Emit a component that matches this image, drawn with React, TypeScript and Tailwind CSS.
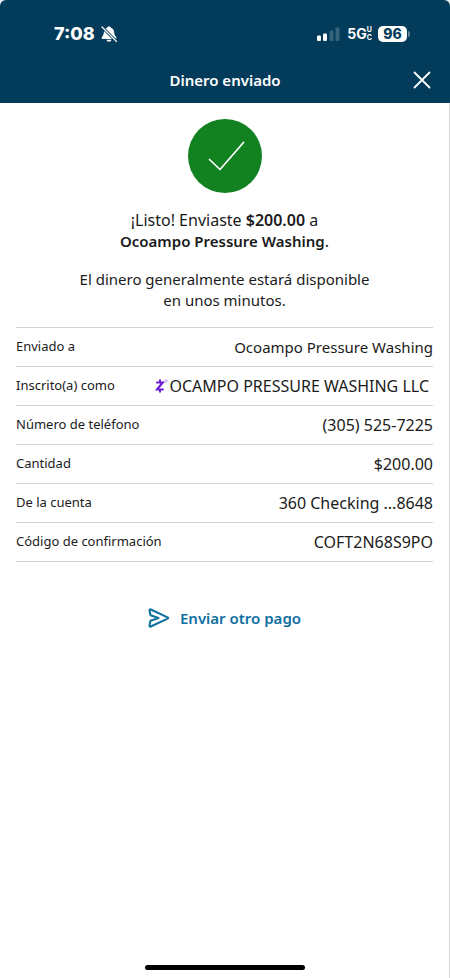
import React from "react";

type Detail = { label: string; value: string; zelle?: boolean; size: string };

const details: Detail[] = [
  { label: "Enviado a", value: "Ocoampo Pressure Washing", size: "text-[15px]" },
  { label: "Inscrito(a) como", value: "OCAMPO PRESSURE WASHING LLC", zelle: true, size: "text-base" },
  { label: "Número de teléfono", value: "(305) 525-7225", size: "text-base" },
  { label: "Cantidad", value: "$200.00", size: "text-base" },
  { label: "De la cuenta", value: "360 Checking ...8648", size: "text-base" },
  { label: "Código de confirmación", value: "COFT2N68S9PO", size: "text-base" },
];

function BellOff() {
  return (
    <svg className="h-4 w-4" viewBox="0 0 16 16" fill="none" aria-hidden="true">
      <path
        d="M8 .4c-1 0-1.700.5-1.900 1.300C4 2.400 2.900 4.200 2.800 6.500 2.700 8.800 2 9.600 1 10.800c-.9 1.100-.4 2.200.8 2.200h12.400c1.200 0 1.700-1.100.8-2.200-1-1.200-1.700-2-1.800-4.300-.1-2.300-1.200-4.100-3.300-4.800C9.700.9 9 .4 8 .4Z"
        fill="#fff"
      />
      <path d="M5.500 13.800h5c-.2 1.200-1.200 2-2.500 2s-2.300-.8-2.500-2Z" fill="#fff" />
      <path d="M1 1 15.500 15.500" stroke="#033c5a" strokeWidth="2.800" />
      <path d="M1 1 15.500 15.500" stroke="#fff" strokeWidth="1.200" strokeLinecap="round" />
    </svg>
  );
}

function Signal() {
  return (
    <svg className="h-4 w-6" viewBox="0 0 24 16" fill="#fff" aria-hidden="true">
      <rect x="0" y="9.500" width="4" height="5.500" rx="1.200" />
      <rect x="6" y="7.500" width="4" height="7.500" rx="1.200" />
      <rect x="12.500" y="4.500" width="4" height="10.500" rx="1.200" opacity=".2" />
      <rect x="18.500" y="1.500" width="4" height="13.500" rx="1.200" opacity=".2" />
    </svg>
  );
}

function ZelleMark() {
  return (
    <svg className="h-4 w-3.5" viewBox="0 0 14 16" fill="none" aria-hidden="true">
      <path d="M5 1.500v3M5 11.500v3" stroke="#6d1ed4" strokeWidth="2" />
      <path d="M1.200 4.500h6.500L2 11.500h6.800" stroke="#6d1ed4" strokeWidth="2.200" />
      <circle cx="11" cy="3" r="1.300" stroke="#c9a9ef" strokeWidth="1" />
    </svg>
  );
}

function SendIcon() {
  return (
    <svg
      className="h-5 w-[22px]"
      viewBox="0 0 22 20"
      fill="none"
      stroke="#0f6f9f"
      strokeWidth="2"
      strokeLinejoin="round"
      strokeLinecap="round"
      aria-hidden="true"
    >
      <path d="M1.500 2.500Q1.400 1 2.800 1.500L19.600 9.300q1.300.7 0 1.400L2.800 18.500Q1.400 19 1.500 17.500L2.500 12.800 10.500 10 2.500 7.200Z" />
    </svg>
  );
}

export default function App() {
  return (
    <div className="flex min-h-screen flex-col bg-[#033c5a] font-['Noto_Sans',sans-serif] text-[#1b1b1b]">
      <header className="bg-[#e6edf1] text-white">
        <div className="rounded-t-md bg-[#033c5a]">
          <div className="flex h-14 items-end justify-between pr-10 pl-[54px] pb-3">
            <div className="flex items-center gap-1.5">
              <span className="font-['Inter',sans-serif] text-lg leading-5 font-extrabold">7:08</span>
              <BellOff />
            </div>
            <div className="flex h-5 items-center gap-1.5">
              <Signal />
              <div className="flex items-center font-['Inter',sans-serif] font-bold">
                <span className="text-sm leading-4">5G</span>
                <span className="flex flex-col text-[7px] leading-[8px]">
                  <span>U</span>
                  <span>C</span>
                </span>
              </div>
              <div className="flex items-center gap-px">
                <span className="flex h-4 w-[29px] items-center justify-center rounded-[5px] bg-white font-['Inter',sans-serif] text-sm leading-4 font-extrabold text-[#033c5a]">
                  96
                </span>
                <span className="h-1.5 w-0.5 rounded-r-sm bg-[#5f8297]" />
              </div>
            </div>
          </div>
          <div className="grid h-[47px] grid-cols-[1fr_auto_1fr] items-center px-3">
            <h1 className="col-start-2 text-[15px] leading-5 font-semibold">Dinero enviado</h1>
            <button type="button" aria-label="Cerrar" className="flex h-8 w-8 items-center justify-center justify-self-end">
              <svg className="h-[18px] w-[18px]" viewBox="0 0 18 18" stroke="#fff" strokeWidth="1.800" strokeLinecap="round" aria-hidden="true">
                <path d="M1.500 1.500 16.500 16.500M16.500 1.500 1.500 16.500" />
              </svg>
            </button>
          </div>
        </div>
      </header>

      <main className="flex flex-1 flex-col items-center border-r border-[#d5d5d5] bg-white px-4 pt-4">
        <svg className="h-[74px] w-[74px]" viewBox="0 0 74 74" fill="none" aria-hidden="true">
          <circle cx="37" cy="37" r="37" fill="#12811f" />
          <path d="M21.500 40.500 32 50.500 55.500 23.500" stroke="#fff" strokeWidth="1.700" strokeLinecap="round" strokeLinejoin="round" />
        </svg>

        <p className="mt-[17px] text-center text-base leading-[21px]">
          ¡Listo! Enviaste <strong className="font-semibold">$200.00</strong> a<br />
          <strong className="text-[15px] font-semibold">Ocoampo Pressure Washing</strong>.
        </p>
        <p className="mt-[17px] text-center text-[15px] leading-[21px]">
          El dinero generalmente estará disponible
          <br />
          en unos minutos.
        </p>

        <dl className="mt-4 w-full border-t border-[#d4d4d4]">
          {details.map((d) => (
            <div key={d.label} className="flex h-[39px] items-center justify-between border-b border-[#d4d4d4]">
              <dt className="text-[13px]">{d.label}</dt>
              <dd className={`flex items-center ${d.size} ${d.zelle ? "pr-1" : ""}`}>
                {d.zelle && <ZelleMark />}
                {d.value}
              </dd>
            </div>
          ))}
        </dl>

        <button type="button" className="mt-11 flex items-center gap-2.5 text-[15px] leading-6 font-semibold text-[#0f6f9f]">
          <SendIcon />
          Enviar otro pago
        </button>

        <div className="mt-auto mb-2 h-[5px] w-40 rounded-full bg-black" />
      </main>
    </div>
  );
}
